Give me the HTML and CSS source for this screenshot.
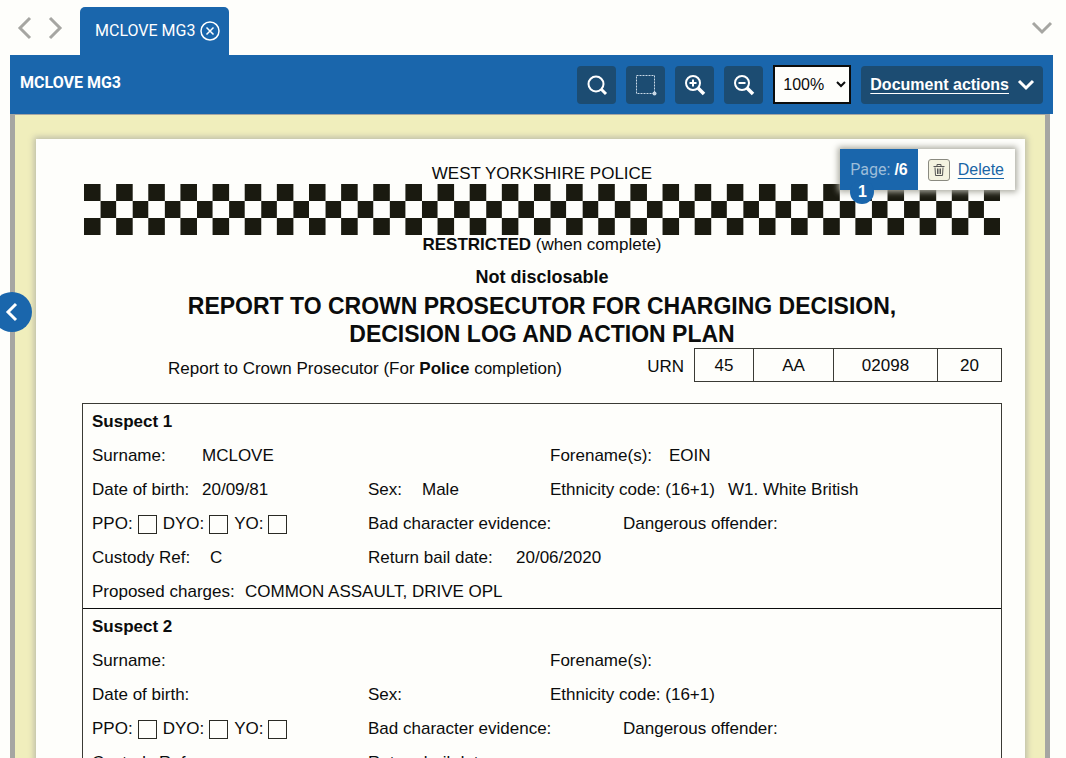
FILE: index.html
```html
<!DOCTYPE html>
<html lang="en">
<head>
<meta charset="utf-8">
<title>MCLOVE MG3</title>
<link rel="stylesheet" href="styles.css">
</head>
<body>
<div class="app">
  <nav class="tabs" aria-label="Open documents">
    <button class="tabs__arrow" aria-label="Previous tab"><svg width="16" height="24" viewBox="0 0 16 24"><path d="M13 2 3 12l10 10"/></svg></button>
    <button class="tabs__arrow" aria-label="Next tab"><svg width="16" height="24" viewBox="0 0 16 24"><path d="M3 2l10 10L3 22"/></svg></button>
    <div class="tab">
      <a class="tab__link" href="#document">MCLOVE MG3</a>
      <button class="tab__close" aria-label="Close tab"><svg width="20" height="20" viewBox="0 0 20 20"><circle cx="10" cy="10" r="9"/><path d="M6.500 6.500l7 7m0-7l-7 7"/></svg></button>
    </div>
    <button class="tabs__more" aria-label="List of tabs"><svg width="22" height="14" viewBox="0 0 22 14"><path d="M2 2l9 9 9-9"/></svg></button>
  </nav>

  <header class="toolbar">
    <h1 class="toolbar__title">MCLOVE MG3</h1>
    <button class="tool" aria-label="Search"><svg width="22" height="22" viewBox="0 0 22 22"><circle cx="10" cy="10" r="7.500" stroke-width="2"/><path d="M15 15l5 5" stroke-width="3"/></svg></button>
    <button class="tool tool--area" aria-label="Select area"><svg width="22" height="22" viewBox="0 0 22 22"><path d="M1.500 1.500h18v18h-18z" stroke-width="1" stroke-dasharray="2 1"/><circle class="dot" cx="19.500" cy="19.500" r="2"/></svg></button>
    <button class="tool" aria-label="Zoom in"><svg width="22" height="22" viewBox="0 0 22 22"><circle cx="9" cy="9" r="7" stroke-width="2"/><path d="M9 5.500v7M5.500 9h7" stroke-width="2"/><path d="M14 14l6 6" stroke-width="3.500"/></svg></button>
    <button class="tool" aria-label="Zoom out"><svg width="22" height="22" viewBox="0 0 22 22"><circle cx="9" cy="9" r="7" stroke-width="2"/><path d="M5.500 9h7" stroke-width="2"/><path d="M14 14l6 6" stroke-width="3.500"/></svg></button>
    <div class="zoom">
      <select class="zoom__select" aria-label="Zoom level"><option>100%</option></select>
      <svg class="zoom__chevron" width="10" height="8" viewBox="0 0 10 8"><path d="M1 2l4 4 4-4"/></svg>
    </div>
    <button class="actions"><span class="actions__label">Document actions</span><svg width="18" height="12" viewBox="0 0 18 12"><path d="M2 2l7 7 7-7"/></svg></button>
  </header>

  <main class="viewer" id="document">
    <article class="page">
      <aside class="page-tools">
        <div class="page-tools__count"><span class="page-tools__label">Page:</span><strong>/6</strong><span class="page-tools__badge">1</span></div>
        <button class="page-tools__delete">
          <span class="bin"><svg width="14" height="14" viewBox="0 0 14 14"><path d="M1.500 3.500h11M5 3V1.500h4V3M3 4.500l.5 8h7l.5-8M5.500 5.500v5.500M7 5.500v5.500M8.500 5.500v5.500"/></svg></span>
          <span class="page-tools__text">Delete</span>
        </button>
      </aside>

      <p>WEST YORKSHIRE POLICE</p>
      <svg class="checker" viewBox="0 0 57 3" preserveAspectRatio="none" aria-hidden="true" shape-rendering="crispEdges">
        <defs><pattern id="check" width="2" height="3" patternUnits="userSpaceOnUse"><path d="M0 0h1v1H0zM1 1h1v1H1zM0 2h1v1H0z"/></pattern></defs>
        <rect width="57" height="3" fill="url(#check)"/>
      </svg>
      <p><strong>RESTRICTED</strong> (when complete)</p>
      <p class="disclosable">Not disclosable</p>
      <h2 class="report-title">REPORT TO CROWN PROSECUTOR FOR CHARGING DECISION,<br>DECISION LOG AND ACTION PLAN</h2>

      <div class="reference">
        <p class="reference__text">Report to Crown Prosecutor (For <strong>Police</strong> completion)</p>
        <table class="urn">
          <tr><th scope="row">URN</th><td class="urn__force">45</td><td class="urn__division">AA</td><td class="urn__number">02098</td><td class="urn__year">20</td></tr>
        </table>
      </div>

      <div class="suspects">
        <section class="suspect">
          <h3 class="row">Suspect 1</h3>
          <div class="row row--three"><p class="field"><span class="label--name">Surname:</span>MCLOVE</p><p></p><p class="field"><span class="label--forename">Forename(s):</span>EOIN</p></div>
          <div class="row row--three"><p class="field"><span class="label--name">Date of birth:</span>20/09/81</p><p class="field"><span class="label--sex">Sex:</span>Male</p><p class="field"><span class="label--ethnicity">Ethnicity code: (16+1)</span>W1. White British</p></div>
          <div class="row row--flags"><div class="checks"><label>PPO:<input type="checkbox"></label><label>DYO:<input type="checkbox"></label><label>YO:<input type="checkbox"></label></div><p>Bad character evidence:</p><p>Dangerous offender:</p></div>
          <div class="row row--flags"><p class="field"><span class="label--custody">Custody Ref:</span>C</p><p class="field"><span class="label--bail">Return bail date:</span>20/06/2020</p></div>
          <div class="row"><p class="field"><span class="label--charges">Proposed charges:</span>COMMON ASSAULT, DRIVE OPL</p></div>
        </section>
        <section class="suspect">
          <h3 class="row">Suspect 2</h3>
          <div class="row row--three"><p>Surname:</p><p></p><p>Forename(s):</p></div>
          <div class="row row--three"><p>Date of birth:</p><p>Sex:</p><p>Ethnicity code: (16+1)</p></div>
          <div class="row row--flags"><div class="checks"><label>PPO:<input type="checkbox"></label><label>DYO:<input type="checkbox"></label><label>YO:<input type="checkbox"></label></div><p>Bad character evidence:</p><p>Dangerous offender:</p></div>
          <div class="row row--flags"><p>Custody Ref:</p><p>Return bail date:</p></div>
          <div class="row"><p>Proposed charges:</p></div>
        </section>
      </div>
    </article>
  </main>
  <button class="side-toggle" aria-label="Show side panel"><svg width="14" height="20" viewBox="0 0 14 20"><path d="M11 2l-8 8 8 8"/></svg></button>
</div>
</body>
</html>
```
FILE: styles.css
```css
* { box-sizing: border-box; }

:root {
  --blue: #1a66ac;
  --dark-blue: #1c4c72;
  --paper: #fefefb;
  --grey: #a6a6a2;
}

body {
  margin: 0;
  background: var(--paper);
  color: #0b0c0c;
  font-family: "Liberation Sans", Arial, sans-serif;
  font-size: 16px;
  line-height: 20px;
}

p, h1, h2, h3 { margin: 0; font-size: inherit; }

button {
  border: 0;
  padding: 0;
  background: none;
  color: inherit;
  font: inherit;
  cursor: pointer;
}

svg { display: block; fill: none; stroke: currentColor; }

.app {
  position: relative;
  display: flex;
  flex-direction: column;
  height: 100vh;
  overflow: hidden;
  padding: 0 13px 0 10px;
}

.tabs {
  display: flex;
  flex: none;
  align-items: center;
  height: 55px;
  padding-left: 7px;
  color: var(--grey);
}

.tabs svg { stroke-width: 3; }
.tabs__arrow { margin-right: 14px; }
.tabs__arrow + .tabs__arrow { margin-right: 17px; }

.tab {
  display: flex;
  align-items: center;
  align-self: flex-end;
  gap: 5px;
  height: 48px;
  padding: 0 9px 0 15px;
  border-radius: 5px 5px 0 0;
  background: var(--blue);
  color: #fff;
}

.tab__link {
  color: inherit;
  font-family: Roboto, sans-serif;
  text-decoration: none;
}

.tabs .tab__close svg { stroke-width: 1.5; }
.tabs__more { margin-left: auto; }

.toolbar {
  display: flex;
  flex: none;
  align-items: center;
  gap: 10px;
  height: 59px;
  padding: 0 10px;
  background: var(--blue);
  color: #fff;
}

.toolbar__title {
  margin-right: auto;
  padding-bottom: 4px;
  font-family: Roboto, sans-serif;
  font-weight: 700;
}

.tool {
  display: grid;
  place-items: center;
  width: 39px;
  height: 38px;
  border-radius: 4px;
  background: var(--dark-blue);
}

.tool--area { color: #c8d8e6; }
.dot { fill: currentColor; stroke: none; }

.zoom { position: relative; }

.zoom__select {
  width: 78px;
  height: 39px;
  padding: 0 8px;
  border: 2px solid #0b0c0c;
  border-radius: 0;
  background: var(--paper);
  color: #0b0c0c;
  font: inherit;
  appearance: none;
}

.zoom__chevron {
  position: absolute;
  top: 15px;
  right: 5px;
  color: #0b0c0c;
  stroke-width: 2;
  pointer-events: none;
}

.actions {
  display: flex;
  align-items: center;
  gap: 8px;
  height: 38px;
  padding: 0 8px 0 9px;
  border-radius: 4px;
  background: var(--dark-blue);
  font-weight: 700;
}

.actions svg { stroke-width: 3; }
.actions__label { text-decoration: underline; text-underline-offset: 3px; }

.viewer {
  flex: 1;
  min-height: 0;
  overflow: hidden;
  margin-right: 3px;
  padding: 24px 20px 0 21px;
  border: solid var(--grey);
  border-width: 1px 5px 0;
  background: #f0eebc;
}

.page {
  position: relative;
  padding: 25px 23px 40px 46px;
  background: var(--paper);
  box-shadow: 0 0 6px 2px #bcbca8;
  font-size: 17px;
  text-align: center;
}

.page-tools {
  position: absolute;
  top: 10px;
  right: 10px;
  display: flex;
  height: 41px;
  background: var(--paper);
  box-shadow: 0 0 6px 2px #aaaaa0;
  font-size: 16px;
}

.page-tools__count {
  position: relative;
  display: flex;
  align-items: center;
  gap: 4px;
  padding: 0 10px;
  background: var(--blue);
  color: #fff;
}

.page-tools__label { color: #9dbdd9; font-family: Roboto, sans-serif; }

.page-tools__badge {
  position: absolute;
  bottom: -14px;
  left: 10px;
  width: 24px;
  height: 24px;
  border-radius: 50%;
  background: var(--blue);
  font-weight: 700;
  line-height: 24px;
}

.page-tools__delete {
  display: flex;
  align-items: center;
  gap: 8px;
  padding: 0 11px 0 10px;
}

.bin {
  display: grid;
  place-items: center;
  width: 22px;
  height: 22px;
  border: 1px solid #8a8a80;
  border-radius: 3px;
  background: #f3f2e0;
  color: #555;
}

.page-tools__text { color: #1a65a5; text-decoration: underline; text-underline-offset: 3px; }

.disclosable { margin-top: 12px; font-size: 18px; font-weight: 700; }

.checker {
  width: calc(100% - 4px);
  height: 51px;
  margin: 0 2px;
}

.checker path { fill: #1a1a10; stroke: none; }
.checker rect { stroke: none; }

.report-title {
  margin-top: 5px;
  font-size: 23px;
  line-height: 28px;
}

.reference {
  display: flex;
  align-items: center;
  justify-content: space-between;
  padding-left: 86px;
}

.reference__text { padding-top: 7px; }

.urn { border-collapse: collapse; }
.urn th { padding: 4px 10px 0 0; font-weight: 400; }
.urn td { height: 33px; padding: 2px 0 0; border: 1px solid #3a3a34; }
.urn__force { width: 59px; }
.urn__division { width: 80px; }
.urn__number { width: 104px; }
.urn__year { width: 64px; }

.suspects {
  margin-top: 21px;
  border: 1px solid #3a3a34;
  text-align: left;
}

.suspect + .suspect { border-top: 1px solid #0b0c0c; }

.row {
  display: grid;
  align-items: center;
  height: 34px;
  padding: 1px 9px 0;
}

.row--three { grid-template-columns: 276fr 182fr 442fr; }
.row--flags { grid-template-columns: 276fr 255fr 369fr; padding-top: 2px; }

.field { display: flex; }
.label--name { width: 110px; }
.label--custody { width: 118px; }
.label--sex { width: 54px; }
.label--bail { width: 148px; }
.label--forename { width: 119px; }
.label--ethnicity { width: 178px; }
.label--charges { width: 153px; }

.checks { display: flex; gap: 6px; }
.checks label { display: flex; align-items: center; gap: 5px; }

.checks input {
  width: 19px;
  height: 19px;
  margin: 0;
  border: 1px solid #2a2a24;
  appearance: none;
}

.side-toggle {
  position: absolute;
  top: 292px;
  left: -8px;
  display: grid;
  place-items: center;
  width: 40px;
  height: 40px;
  border-radius: 50%;
  background: var(--blue);
  color: #fff;
}

.side-toggle svg { stroke-width: 3; }
```
